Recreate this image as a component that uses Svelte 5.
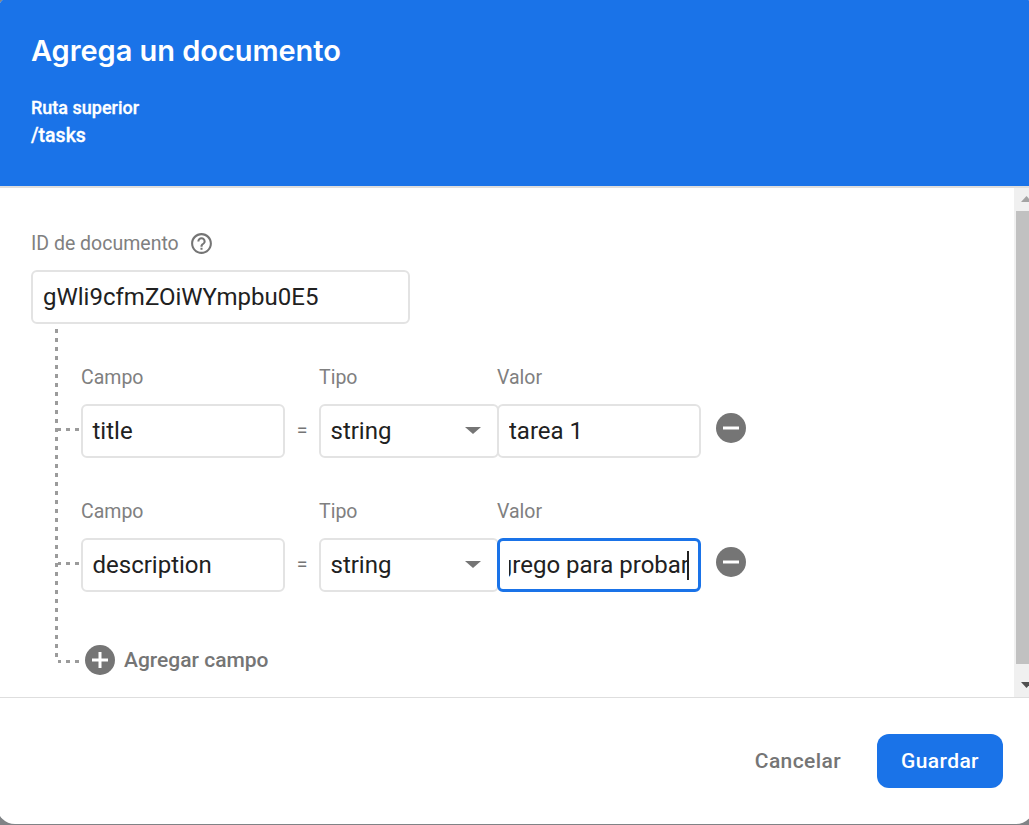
<script>
  const documentId = 'gWli9cfmZOiWYmpbu0E5';
  const fields = [
    { name: 'title', type: 'string', value: 'tarea 1', active: false },
    { name: 'description', type: 'string', value: 'agrego para probar', active: true }
  ];
</script>

<div class="backdrop">
  <section class="dialog">
    <header>
      <h1>Agrega un documento</h1>
      <p class="parent">Ruta superior</p>
      <p class="path">/tasks</p>
    </header>

    <div class="body">
      <div class="content">
        <div class="id-label">
          <span class="label">ID de documento</span>
          <svg class="help" viewBox="0 0 24 24"><path d="M11 18h2v-2h-2v2zm1-16C6.480 2 2 6.480 2 12s4.480 10 10 10 10-4.480 10-10S17.520 2 12 2zm0 18c-4.410 0-8-3.590-8-8s3.590-8 8-8 8 3.590 8 8-3.590 8-8 8zm0-14c-2.210 0-4 1.790-4 4h2c0-1.100.9-2 2-2s2 .9 2 2c0 2-3 1.750-3 5h2c0-2.250 3-2.500 3-5 0-2.210-1.790-4-4-4z" /></svg>
        </div>
        <div class="box id-box"><span>{documentId}</span></div>

        <div class="tree">
          {#each fields as field}
            <div class="row">
              <i class="branch"></i>
              <div class="col name">
                <span class="label">Campo</span>
                <div class="box"><span>{field.name}</span></div>
              </div>
              <span class="equals">=</span>
              <div class="col type">
                <span class="label">Tipo</span>
                <div class="box"><span>{field.type}</span><i class="arrow"></i></div>
              </div>
              <div class="col value">
                <span class="label">Valor</span>
                <div class="box" class:active={field.active}>
                  <div class="clip"><span>{field.value}</span>{#if field.active}<i class="caret"></i>{/if}</div>
                </div>
              </div>
              <svg class="round remove" viewBox="0 0 30 30"><circle cx="15" cy="15" r="15" /><path d="M7 13.500h16v3H7z" /></svg>
            </div>
          {/each}
          <div class="add">
            <i class="branch"></i>
            <svg class="round" viewBox="0 0 30 30"><circle cx="15" cy="15" r="15" /><path d="M7 13.500h6.500V7h3v6.500H23v3h-6.500V23h-3v-6.500H7z" /></svg>
            <span>Agregar campo</span>
          </div>
        </div>
      </div>

      <div class="scrollbar">
        <svg viewBox="0 0 15 23"><path fill="#a3a3a3" d="M5 14L10.500 8L16 14z" /></svg>
        <div class="thumb"></div>
        <svg viewBox="0 0 15 33"><path fill="#505050" d="M5 18h11l-5.500 6z" /></svg>
      </div>
    </div>

    <footer>
      <span class="cancel">Cancelar</span>
      <span class="save">Guardar</span>
    </footer>
  </section>
</div>

<style>
  :global(body) { background: #808386; }
  * { box-sizing: border-box; }
  .backdrop {
    height: 825px;
    overflow: hidden;
    display: flex;
    font-family: Roboto, sans-serif;
    background: #808386;
  }
  .dialog {
    flex: none;
    width: 1037px;
    height: 829px;
    margin: -5px 0 0 -3px;
    border-radius: 18px;
    overflow: hidden;
    background: #fff;
    display: flex;
    flex-direction: column;
  }
  header {
    height: 193px;
    flex: none;
    padding: 36px 34px 0;
    background: #1a73e8;
    border-bottom: 2px solid #dedede;
    color: #fff;
  }
  h1 {
    margin: 0;
    font: 600 29px/40px Inter, sans-serif;
    letter-spacing: -0.05px;
  }
  p { margin: 0; font-weight: 500; line-height: 27px; -webkit-text-stroke: 0.3px #fff; }
  .parent { font-size: 18px; margin-top: 23px; }
  .path { font-size: 19.5px; line-height: 29px; }
  .body { height: 509px; flex: none; display: flex; }
  .content { width: 1017px; flex: none; padding: 44px 34px 0; }
  .label { font-size: 19.5px; line-height: 24px; color: #808080; }
  .id-label { display: flex; align-items: center; gap: 10px; height: 24px; margin-bottom: 14px; }
  .help { width: 25px; height: 25px; margin-top: -1px; fill: #757575; }
  .box {
    height: 54px;
    border: 2px solid #e3e3e3;
    border-radius: 6px;
    padding: 0 10px;
    display: flex;
    align-items: center;
    justify-content: space-between;
    font-size: 24px;
    color: #212121;
    white-space: nowrap;
  }
  .id-box { width: 379px; }
  .tree {
    margin: 5px 0 0 24px;
    height: 333px;
    background: repeating-linear-gradient(#9b9b9b 0 4px, transparent 4px 9px) left top / 3px 100% no-repeat;
  }
  .row { display: flex; align-items: flex-start; height: 134px; padding-top: 36px; }
  .branch {
    flex: none;
    width: 21px;
    height: 3px;
    margin-left: 3px;
    background: linear-gradient(90deg, #9b9b9b 0 3px, transparent 3px 8px, #9b9b9b 8px 12px, transparent 12px 17px, #9b9b9b 17px 21px);
  }
  .row .branch { margin-top: 63px; }
  .col { display: flex; flex-direction: column; gap: 14px; padding-top: 1px; flex: none; }
  .name { width: 204px; margin-left: 2px; }
  .name .box, .type .box { padding-left: 9.500px; }
  .equals { width: 34px; text-align: center; font-size: 19.5px; line-height: 24px; margin-top: 54px; color: #757575; }
  .type { width: 180px; }
  .value { width: 204px; margin-left: -2px; }
  .arrow {
    border: 7.500px solid transparent;
    border-left-width: 8px;
    border-right-width: 8px;
    border-top: 7.500px solid #757575;
    border-bottom: 0;
    margin: -2px 6px 0 0;
  }
  .box.active { border: 3px solid #1a73e8; padding: 0 9px; }
  .clip { width: 100%; height: 34px; overflow: hidden; display: flex; align-items: center; }
  .active .clip { justify-content: flex-end; }
  .caret { flex: none; width: 2px; height: 29px; margin-left: -2px; background: #212121; }
  .round { width: 30px; height: 30px; flex: none; fill: #757575; }
  .round path { fill: #fff; }
  .remove { margin: 48px 0 0 15px; }
  .add { display: flex; align-items: center; height: 30px; margin-top: 48px; font-size: 21px; font-weight: 500; color: #757575; }
  .add .branch { margin-top: 3px; }
  .add .round { margin: 0 9px 0 6px; }
  .scrollbar { width: 20px; background: #f0f0f0; flex: none; padding-left: 2px; display: flex; flex-direction: column; }
  .scrollbar svg { overflow: visible; width: 15px; flex: none; }
  .thumb { flex: 1; width: 18px; background: #c1c1c1; }
  footer {
    flex: 1;
    border-top: 1px solid #dedede;
    display: flex;
    justify-content: flex-end;
    align-items: flex-start;
    padding: 36px 31px 0 0;
    font-size: 21px;
    font-weight: 500;
    line-height: 54px;
    letter-spacing: 0.4px;
  }
  .cancel { color: #757575; margin-right: 36px; }
  .save { width: 126px; height: 54px; border-radius: 12px; background: #1a73e8; color: #fff; text-align: center; }
</style>
